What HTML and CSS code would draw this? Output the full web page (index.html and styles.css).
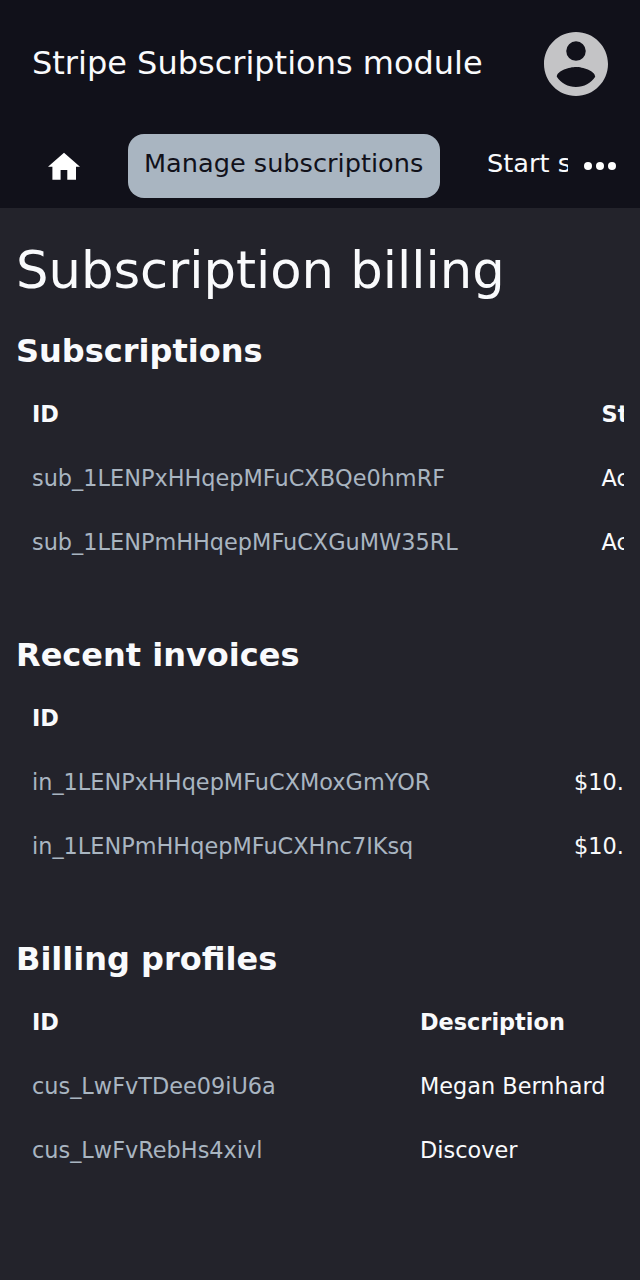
FILE: index.html
```html
<!DOCTYPE html>
<html lang="en">
<head>
<meta charset="utf-8">
<title>Stripe Subscriptions module</title>
<link rel="stylesheet" href="styles.css">
</head>
<body>
<header class="header">
  <div class="topbar">
    <div class="brand">Stripe Subscriptions module</div>
    <svg class="avatar" viewBox="2 2 20 20"><path fill="#c4c4c6" d="M12 2C6.480 2 2 6.480 2 12s4.480 10 10 10 10-4.480 10-10S17.520 2 12 2zm0 2.900a3.050 3.050 0 1 1 0 6.100a3.050 3.050 0 0 1 0-6.100zm0 14.300c-2.500 0-4.710-1.280-6-3.220.03-1.990 4-3.080 6-3.080 1.990 0 5.970 1.090 6 3.080-1.290 1.940-3.500 3.220-6 3.220z"/></svg>
  </div>
  <nav class="nav">
    <a class="home"><svg viewBox="0 0 32 27"><path fill="#fff" d="M16 -0.300 L32 13.700 H28 V26.700 H19.300 V17 H12.600 V26.700 H4.400 V13.700 H0 Z"/></svg></a>
    <a class="tab active">Manage subscriptions</a>
    <a class="tab next">Start subscription</a>
    <a class="more"><svg viewBox="0 0 32 8"><g fill="#fff"><circle cx="4" cy="4" r="4"/><circle cx="16" cy="4" r="4"/><circle cx="28" cy="4" r="4"/></g></svg></a>
  </nav>
</header>
<main class="content">
  <h1>Subscription billing</h1>
  <section>
    <h2>Subscriptions</h2>
    <div class="table subscriptions">
      <div class="row head"><span>ID</span><span>Status</span></div>
      <div class="row"><a>sub_1LENPxHHqepMFuCXBQe0hmRF</a><span>Active</span></div>
      <div class="row"><a>sub_1LENPmHHqepMFuCXGuMW35RL</a><span>Active</span></div>
    </div>
  </section>
  <section>
    <h2>Recent invoices</h2>
    <div class="table invoices">
      <div class="row head"><span>ID</span></div>
      <div class="row"><a>in_1LENPxHHqepMFuCXMoxGmYOR</a><span>$10.00</span></div>
      <div class="row"><a>in_1LENPmHHqepMFuCXHnc7IKsq</a><span>$10.00</span></div>
    </div>
  </section>
  <section>
    <h2>Billing profiles</h2>
    <div class="table profiles">
      <div class="row head"><span>ID</span><span>Description</span></div>
      <div class="row"><a>cus_LwFvTDee09iU6a</a><span>Megan Bernhard</span></div>
      <div class="row"><a>cus_LwFvRebHs4xivl</a><span>Discover</span></div>
    </div>
  </section>
</main>
</body>
</html>
```
FILE: styles.css
```css
* { box-sizing: border-box; }
body { margin: 0; height: 1280px; overflow: hidden; background: #23232b; color: #f9fafc; font-family: "DejaVu Sans", sans-serif; font-size: 22.4px; }
.header { height: 208px; background: #11111a; }
.topbar { display: flex; justify-content: space-between; align-items: center; height: 128px; padding: 0 32px; }
.brand { font-size: 32px; line-height: 40px; padding-bottom: 2px; white-space: nowrap; }
.avatar { width: 64px; height: 64px; }
.nav { display: flex; align-items: flex-start; height: 80px; padding-top: 6px; }
.home { width: 128px; height: 64px; padding: 19px 48px 0; }
.home svg { display: block; width: 32px; height: 27px; overflow: visible; }
.tab { height: 64px; line-height: 58px; font-size: 25.6px; white-space: nowrap; overflow: hidden; }
.active { width: 312px; padding-left: 16px; border-radius: 16px; background: #a9b5c1; color: #11111a; }
.next { width: 81px; margin-left: 47px; }
.more { padding: 28px 0 0 16px; }
.more svg { display: block; width: 32px; height: 8px; }
.content { padding: 31px 16px 0; }
h1 { margin: 0; font-size: 51.2px; line-height: 62px; font-weight: 400; }
h2 { margin: 0; font-size: 32px; line-height: 38px; font-weight: 700; }
section { height: 304px; }
h1 + section { height: 335px; padding-top: 31px; }
.table { margin-top: 12px; overflow: hidden; }
.row { display: grid; height: 64px; line-height: 64px; padding-left: 16px; white-space: nowrap; }
.row a { color: #a9b5c1; }
.head { font-weight: 700; }
.subscriptions .row { grid-template-columns: 569.5px 120px; }
.invoices .row { grid-template-columns: 542px 120px; }
.profiles .row { grid-template-columns: 388px 260px; }
```
